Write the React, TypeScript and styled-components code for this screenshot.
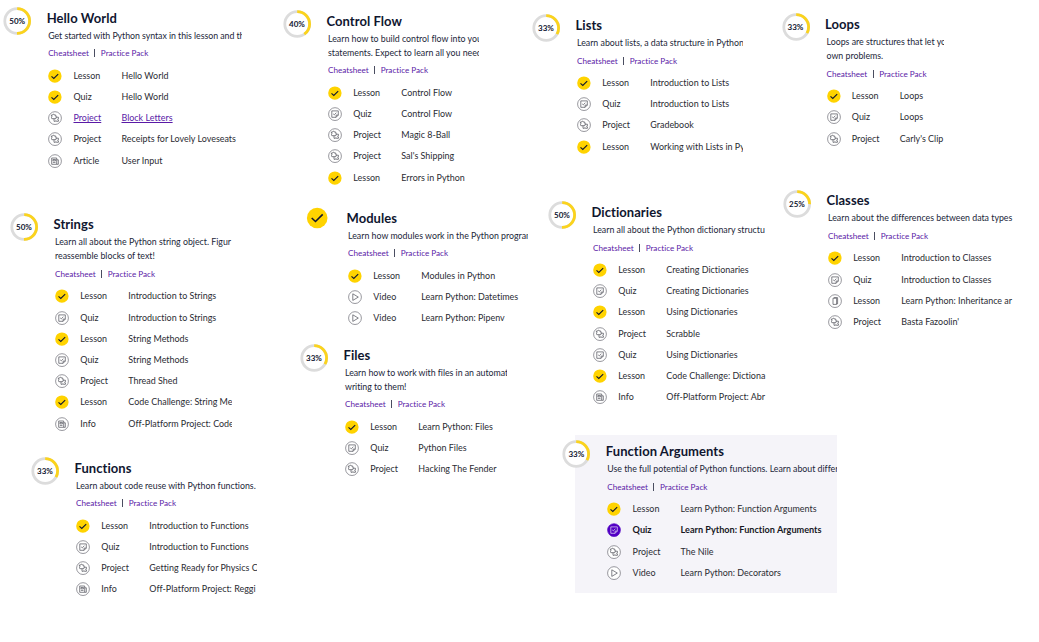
import React from "react";
import styled, { createGlobalStyle, css } from "styled-components";

const Global = createGlobalStyle`
  body {
    margin: 0;
    background: #fff;
    color: #10162f;
    font-family: Lato, "Open Sans", sans-serif;
    font-variant-ligatures: none;
    overflow: hidden;
  }
`;

const NAVY = "#10162f";
const YELLOW = "#ffd300";
const PURPLE = "#5a1aa6";

const Board = styled.main`
  display: grid;
  box-sizing: border-box;
  grid-template-columns: 283px 249px 249px 258px;
  height: 642px;
  padding-top: 0.4px;
`;

const Column = styled.div`
  display: flex;
  flex-direction: column;
  align-items: flex-start;
  min-width: 0;
`;

const Card = styled.section<{ $indent: number; $gap: number }>`
  display: flex;
  flex: none;
  align-items: flex-start;
  margin: ${(p) => p.$gap}px 0 0 ${(p) => p.$indent}px;
`;

const Progress = styled.div<{ $drop: number }>`
  display: grid;
  flex: none;
  width: 28px;
  height: 28px;
  margin: ${(p) => p.$drop - 3.9}px -15.5px 0 0;
  place-items: center;
  z-index: 1;

  > * {
    grid-area: 1 / 1;
  }
`;

const Percent = styled.span`
  font-size: 8px;
  font-weight: 700;
  line-height: 12px;
  color: ${NAVY};
`;

const Body = styled.div<{ $width: number; $active?: boolean }>`
  box-sizing: border-box;
  width: ${(p) => p.$width}px;
  padding-left: 32.5px;
  overflow: hidden;
  white-space: nowrap;
  ${(p) =>
    p.$active &&
    css`
      padding-top: 6.5px;
      padding-bottom: 9.5px;
      background: #f5f4f9;
    `}
`;

const Title = styled.h2`
  margin: 0 0 0 -1.5px;
  font-size: 13px;
  font-weight: 700;
  line-height: 21px;
  letter-spacing: 0.06px;
  color: ${NAVY};
`;

const Summary = styled.p<{ $tracking?: number }>`
  margin: 0;
  font-size: 8.8px;
  letter-spacing: ${(p) => p.$tracking ?? 0}px;
  line-height: 14px;
  color: #222639;
  white-space: pre;
`;

const Links = styled.nav`
  display: flex;
  margin: 3.5px 0 4.9px;
  font-size: 8.15px;
  line-height: 14px;
  color: ${NAVY};
`;

const ResourceLink = styled.a`
  color: ${PURPLE};
`;

const Divider = styled.span`
  width: 1px;
  height: 8px;
  margin: 3px 5.5px 0 5.5px;
  background: #4a4d60;
`;

const List = styled.ul`
  margin: 0;
  padding: 0;
  list-style: none;
`;

const Item = styled.li<{ $state?: State }>`
  display: grid;
  grid-template-columns: 25.3px 48px auto;
  align-items: center;
  height: 21.2px;
  font-size: 8.95px;
  line-height: 14px;
  color: #2b2c33;
  ${(p) =>
    p.$state === "hover" &&
    css`
      color: ${PURPLE};
      text-decoration: underline;
    `}
  ${(p) =>
    p.$state === "current" &&
    css`
      color: #17181f;
      font-size: 9.15px;
      font-weight: 700;
    `}
`;

type State = "done" | "current" | "hover";
type Kind = "Lesson" | "Quiz" | "Project" | "Article" | "Info" | "Video";
type Row = [Kind, string, State?];

interface Module {
  title: string;
  percent: number;
  summary: string[];
  rows: Row[];
  indent: number;
  gap: number;
  width: number;
  drop?: number;
  tracking?: number;
  active?: boolean;
}

const newspaper = (
  <path d="M3.7 4h5v6.3h-5zM8.7 5.8h1.6v4.5H8.7M4.9 5.5h2.6v1.3H4.9zM4.9 8.4h2.6" />
);

const glyphs: Record<Kind, React.ReactNode> = {
  Lesson: <path d="M5 4.2h3.6v6.2H5zM6.2 4.2v-.6h3.4v6.2h-1" />,
  Quiz: <path d="M3.8 3.9h6.5v4.2l-2.2 2.2H3.8zM10.3 8.1H8.1v2.2M5.2 6.9l1.1 1 2-2.2" />,
  Project: (
    <path d="M3.4 4h1.5c-.2-1.1 1.5-1.1 1.3 0h1.6v1.5c1.1-.2 1.1 1.4 0 1.2v1h-4c-.2-1-.4-1.4-.4-1.4.9-.1.9-1.1 0-1.2zM6 7.7v2.6h1.4c-.1-.9 1.2-.9 1.1 0h1.9V8.9c-1 .1-1-1.2 0-1.1V6.2H8.3" />
  ),
  Article: newspaper,
  Info: newspaper,
  Video: <path d="M4.8 3.8v6.6l5.5-3.3z" />,
};

function StatusIcon({ kind, state }: { kind: Kind; state?: State }) {
  if (state === "done") {
    return (
      <svg width="14" height="14" viewBox="0 0 14 14" fill="none">
        <circle cx="6.9" cy="7.1" r="6.7" fill={YELLOW} />
        <path d="M3.5 7.3l2.3 2.1 4.4-4.3" stroke={NAVY} strokeWidth="1.1" />
      </svg>
    );
  }
  const current = state === "current";
  return (
    <svg width="14" height="14" viewBox="0 0 14 14" fill="none">
      <circle
        cx="7"
        cy="7.1"
        r="6.4"
        fill={current ? "#5200c4" : "#fff"}
        stroke={current ? "#5200c4" : "#6b6c74"}
        strokeWidth="0.7"
      />
      <g stroke={current ? "#e6dcf7" : "#4c4d56"} strokeWidth="0.7" strokeLinejoin="round">
        {glyphs[kind]}
      </g>
    </svg>
  );
}

const R = 12.4;
const LENGTH = 2 * Math.PI * R;

function ProgressRing({ percent, drop }: { percent: number; drop: number }) {
  if (percent === 100) {
    return (
      <Progress $drop={drop}>
        <svg width="28" height="28" viewBox="0 0 28 28" fill="none">
          <circle cx="14.2" cy="14" r="10.3" fill={YELLOW} />
          <path d="M8.7 14l3.8 3.5 7.2-7.1" stroke={NAVY} strokeWidth="1.6" />
        </svg>
      </Progress>
    );
  }
  return (
    <Progress $drop={drop}>
      <svg width="28" height="28" viewBox="0 0 28 28" fill="none">
        <circle cx="14.2" cy="14" r={R} fill="#fff" stroke="#dcdcdc" strokeWidth="2.8" />
        <circle
          cx="14.2"
          cy="14"
          r={R}
          stroke="#fbd31c"
          strokeWidth="2.8"
          strokeDasharray={`${(LENGTH * percent) / 100} ${LENGTH}`}
          transform="rotate(-90 14.2 14)"
        />
      </svg>
      <Percent>{percent}%</Percent>
    </Progress>
  );
}

function ModuleCard({ module: m }: { module: Module }) {
  const drop = (m.drop ?? 3) + (m.active ? 6.5 : 0);
  return (
    <Card $indent={m.indent} $gap={m.gap}>
      <ProgressRing percent={m.percent} drop={drop} />
      <Body $width={m.width} $active={m.active}>
        <Title>{m.title}</Title>
        {m.summary.map((line) => (
          <Summary key={line} $tracking={m.tracking}>
            {line}
          </Summary>
        ))}
        <Links>
          <ResourceLink>Cheatsheet</ResourceLink>
          <Divider />
          <ResourceLink>Practice Pack</ResourceLink>
        </Links>
        <List>
          {m.rows.map(([kind, name, state], i) => (
            <Item key={i} $state={state}>
              <StatusIcon kind={kind} state={state} />
              <span>{kind}</span>
              <span>{name}</span>
            </Item>
          ))}
        </List>
      </Body>
    </Card>
  );
}

const columns: Module[][] = [
  [
    {
      title: "Hello World", percent: 50, indent: 3.2, gap: 7.5, width: 226.3, tracking: -0.05,
      summary: ["Get started with Python syntax in this lesson and th"],
      rows: [
        ["Lesson", "Hello World", "done"],
        ["Quiz", "Hello World", "done"],
        ["Project", "Block Letters", "hover"],
        ["Project", "Receipts for Lovely Loveseats"],
        ["Article", "User Input"],
      ],
    },
    {
      title: "Strings", percent: 50, indent: 10, gap: 43.2, width: 209.5, drop: 2.5,
      summary: ["Learn all about the Python string object. Figur", "reassemble blocks of text!"],
      rows: [
        ["Lesson", "Introduction to Strings", "done"],
        ["Quiz", "Introduction to Strings"],
        ["Lesson", "String Methods", "done"],
        ["Quiz", "String Methods"],
        ["Project", "Thread Shed"],
        ["Lesson", "Code Challenge: String Me", "done"],
        ["Info", "Off-Platform Project: Code"],
      ],
    },
    {
      title: "Functions", percent: 33, indent: 31, gap: 23.8, width: 213,
      summary: ["Learn about code reuse with Python functions."],
      rows: [
        ["Lesson", "Introduction to Functions", "done"],
        ["Quiz", "Introduction to Functions"],
        ["Project", "Getting Ready for Physics C"],
        ["Info", "Off-Platform Project: Reggi"],
      ],
    },
  ],
  [
    {
      title: "Control Flow", percent: 40, indent: 0, gap: 10.5, width: 183.5,
      summary: ["Learn how to build control flow into you", "statements. Expect to learn all you need"],
      rows: [
        ["Lesson", "Control Flow", "done"],
        ["Quiz", "Control Flow"],
        ["Project", "Magic 8-Ball"],
        ["Project", "Sal's Shipping"],
        ["Lesson", "Errors in Python", "done"],
      ],
    },
    {
      title: "Modules", percent: 100, indent: 20, gap: 19.7, width: 212.5, drop: 0,
      summary: ["Learn how modules work in the Python program"],
      rows: [
        ["Lesson", "Modules in Python", "done"],
        ["Video", "Learn Python: Datetimes"],
        ["Video", "Learn Python: Pipenv"],
      ],
    },
    {
      title: "Files", percent: 33, indent: 17, gap: 15.9, width: 194.5, tracking: -0.03,
      summary: ["Learn how to work with files in an automat", "writing to them!"],
      rows: [
        ["Lesson", "Learn Python: Files", "done"],
        ["Quiz", "Python Files"],
        ["Project", "Hacking The Fender"],
      ],
    },
  ],
  [
    {
      title: "Lists", percent: 33, indent: 0, gap: 14.7, width: 198.3, tracking: -0.01,
      summary: ["Learn about lists, a data structure in Python"],
      rows: [
        ["Lesson", "Introduction to Lists", "done"],
        ["Quiz", "Introduction to Lists"],
        ["Project", "Gradebook"],
        ["Lesson", "Working with Lists in Py", "done"],
      ],
    },
    {
      title: "Dictionaries", percent: 50, indent: 16, gap: 44.8, width: 205.8, drop: 3,
      summary: ["Learn all about the Python dictionary structu"],
      rows: [
        ["Lesson", "Creating Dictionaries", "done"],
        ["Quiz", "Creating Dictionaries"],
        ["Lesson", "Using Dictionaries", "done"],
        ["Project", "Scrabble"],
        ["Quiz", "Using Dictionaries"],
        ["Lesson", "Code Challenge: Dictiona", "done"],
        ["Info", "Off-Platform Project: Abr"],
      ],
    },
    {
      title: "Function Arguments", percent: 33, indent: 30.3, gap: 27, width: 262, active: true, tracking: -0.02,
      summary: ["Use the full potential of Python functions. Learn about differ"],
      rows: [
        ["Lesson", "Learn Python: Function Arguments", "done"],
        ["Quiz", "Learn Python: Function Arguments", "current"],
        ["Project", "The Nile"],
        ["Video", "Learn Python: Decorators"],
      ],
    },
  ],
  [
    {
      title: "Loops", percent: 33, indent: 0.5, gap: 13.8, width: 150.2, drop: 2.5,
      summary: ["Loops are structures that let yo", "own problems."],
      rows: [
        ["Lesson", "Loops", "done"],
        ["Quiz", "Loops"],
        ["Project", "Carly's Clip"],
      ],
    },
    {
      title: "Classes", percent: 25, indent: 2, gap: 41.3, width: 219,
      summary: ["Learn about the differences between data types"],
      rows: [
        ["Lesson", "Introduction to Classes", "done"],
        ["Quiz", "Introduction to Classes"],
        ["Lesson", "Learn Python: Inheritance ar"],
        ["Project", "Basta Fazoolin'"],
      ],
    },
  ],
];

export default function App() {
  return (
    <>
      <Global />
      <Board>
        {columns.map((modules, i) => (
          <Column key={i}>
            {modules.map((m) => (
              <ModuleCard key={m.title} module={m} />
            ))}
          </Column>
        ))}
      </Board>
    </>
  );
}
